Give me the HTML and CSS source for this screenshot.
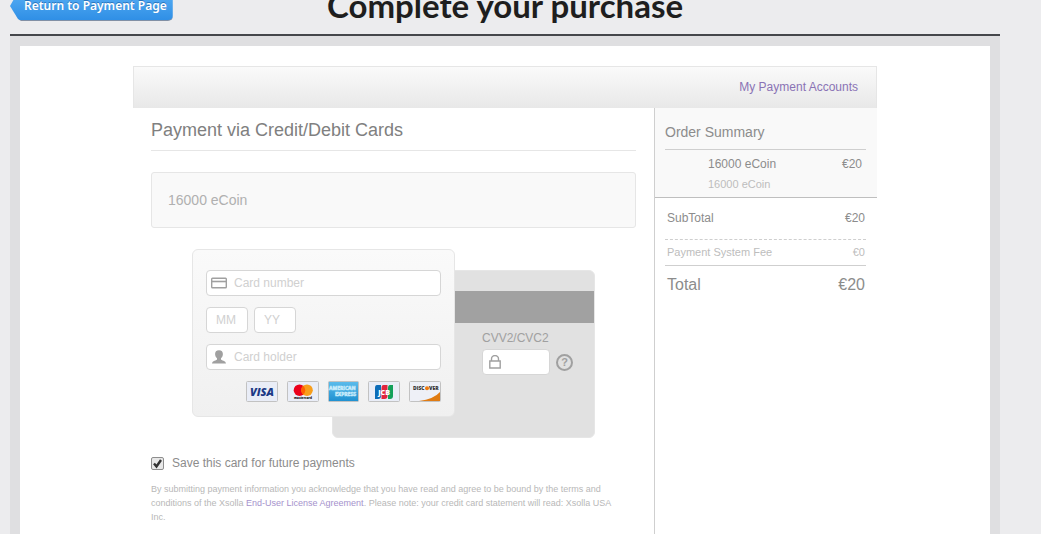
FILE: index.html
```html
<!DOCTYPE html>
<html lang="en">
<head>
	<meta charset="UTF-8">
	<title>Complete your purchase</title>
	<link rel="stylesheet" href="styles.css">
</head>
<body>

	<div class="page">
		<header class="header">
			<a class="back-btn" href="#">Return to Payment Page</a>
			<h1>Complete your purchase</h1>
		</header>

		<div class="frame">
			<div class="shop">
				<nav class="toolbar"><a href="#">My Payment Accounts</a></nav>

				<div class="columns">
					<form class="payment">
						<h2>Payment via Credit/Debit Cards</h2>
						<div class="product">16000 eCoin</div>

						<div class="cards">
							<!-- back side -->
							<div class="card card-back">
								<div class="stripe"></div>
								<div class="cvv">
									<label for="cvv">CVV2/CVC2</label>
									<div class="cvv-row">
										<div class="field">
											<svg width="12" height="14" viewBox="0 0 12 14"><path d="M2.5 6V4a3.5 3.500 0 0 1 7 0v2M.8 6h10.400v7H.8z" fill="none" stroke="#a0a0a0" stroke-width="1.400"/></svg>
											<input type="text" id="cvv">
										</div>
										<button type="button" class="help" aria-label="Help">?</button>
									</div>
								</div>
							</div>

							<!-- front side -->
							<div class="card card-front">
								<div class="field">
									<svg width="16" height="12" viewBox="0 0 16 12"><rect x=".7" y="1.200" width="14.600" height="9.600" rx=".8" fill="#fff" stroke="#a0a0a0" stroke-width="1.400"/><path d="M1 4.500h14" stroke="#a0a0a0" stroke-width="1.600"/></svg>
									<input type="text" placeholder="Card number" aria-label="Card number">
								</div>
								<div class="expiry">
									<div class="field"><input type="text" placeholder="MM" aria-label="Month"></div>
									<div class="field"><input type="text" placeholder="YY" aria-label="Year"></div>
								</div>
								<div class="field">
									<svg width="16" height="14" viewBox="0 0 16 14"><path d="M8 .2c2.600 0 4.100 1.600 3.900 4.100-.1 1.800-.9 3.200-1.900 4v1.200c0 .9 5 1.200 5 4.100H1c0-2.900 5-3.200 5-4.100V8.300c-1-.8-1.800-2.200-1.900-4C3.900 1.800 5.400.2 8 .2z" fill="#a0a0a0"/></svg>
									<input type="text" placeholder="Card holder" aria-label="Card holder">
								</div>
								<div class="brands">
									<svg width="32" height="21" viewBox="0 0 32 21"><rect x=".5" y=".5" width="31" height="20" rx="1" fill="#e9edf7" stroke="#c2c2c2"/><text x="16" y="15" text-anchor="middle" font-family="Open Sans, sans-serif" font-size="11" font-weight="800" font-style="italic" fill="#1c3a86">VISA</text></svg>
									<svg width="32" height="21" viewBox="0 0 32 21"><rect x=".5" y=".5" width="31" height="20" rx="1" fill="#e9edf7" stroke="#c2c2c2"/><circle cx="12.500" cy="9.200" r="5.800" fill="#eb001b"/><circle cx="20" cy="9.200" r="5.800" fill="#f79e1b"/><path d="M16.200 4.800a5.800 5.800 0 0 1 0 8.800 5.800 5.800 0 0 1 0-8.800z" fill="#ff5f00"/><text x="16" y="18" text-anchor="middle" font-family="Open Sans, sans-serif" font-size="3" font-weight="800" fill="#111">mastercard</text></svg>
									<svg width="31" height="21" viewBox="0 0 31 21"><defs><linearGradient id="amex" x2="0" y2="1"><stop stop-color="#5cbcec"/><stop offset="1" stop-color="#1f90d0"/></linearGradient></defs><rect x=".5" y=".5" width="30" height="20" rx="1" fill="url(#amex)" stroke="#c2c2c2"/><g font-family="Open Sans, sans-serif" font-size="5" font-weight="700" fill="#6cc2ea" stroke="#c8ebfb" stroke-width=".6"><text x="1" y="9">AMERICAN</text><text x="7" y="15">EXPRESS</text></g></svg>
									<svg width="32" height="21" viewBox="0 0 32 21"><rect x=".5" y=".5" width="31" height="20" rx="1" fill="#e9edf7" stroke="#c2c2c2"/><path d="M9 4h4v11q0 3-3 3H7V7q0-3 2-3z" fill="#0b6cb8"/><path d="M15.500 4h4v11q0 3-3 3h-3V7q0-3 2-3z" fill="#e0243d"/><path d="M22 4h3v11q0 3-3 3h-2V7q0-3 2-3z" fill="#12a05a"/><text x="16" y="13.500" text-anchor="middle" font-family="Open Sans, sans-serif" font-size="7" font-weight="800" fill="#fff">JCB</text></svg>
									<svg width="32" height="21" viewBox="0 0 32 21"><rect x=".5" y=".5" width="31" height="20" rx="1" fill="#eef0f7" stroke="#c2c2c2"/><path d="M10 20q15-2 21-9v9z" fill="#e07c14"/><g font-family="Open Sans, sans-serif" font-size="5" font-weight="800" fill="#333"><text x="4" y="9">DISC</text><text x="20" y="9">VER</text></g><circle cx="18" cy="7.200" r="2" fill="#f07a10"/></svg>
								</div>
							</div>
						</div>

						<label class="save"><input type="checkbox" checked><span>Save this card for future payments</span></label>
						<p class="legal">By submitting payment information you acknowledge that you have read and agree to be bound by the terms and conditions of the Xsolla <a href="#">End-User License Agreement</a>. Please note: your credit card statement will read: Xsolla USA Inc.</p>
					</form>

					<aside class="summary">
						<div class="order">
							<h3>Order Summary</h3>
							<div class="order-item">
								<div class="row"><span>16000 eCoin</span><span>€20</span></div>
								<div class="desc">16000 eCoin</div>
							</div>
						</div>
						<div class="totals">
							<div class="row subtotal"><span>SubTotal</span><span>€20</span></div>
							<div class="row fee"><span>Payment System Fee</span><span>€0</span></div>
							<div class="row total"><span>Total</span><span>€20</span></div>
						</div>
					</aside>
				</div>
			</div>
		</div>
	</div>

</body>
</html>
```

FILE: styles.css
```css
*{margin: 0;padding: 0;box-sizing: border-box;}
body{background: #ececee;font: 12px "Liberation Sans", Arial, sans-serif;color: #8c8c8c;}
a{color: #8a73b5;text-decoration: none;}

.page{display: flex;flex-direction: column;min-height: 100vh;padding: 0 41px 0 10px;}

/* header, its top part is scrolled out */
.header{display: grid;grid-template-columns: 1fr auto 1fr;align-items: start;height: 46px;margin-top: -10px;border-bottom: 2px solid #45474b;}
.header h1{font: 700 33px/30px Lato, sans-serif;color: #1e1e1e;}
.back-btn{justify-self: start;height: 31px;padding: 0 6px 0 14px;border-bottom: 1px solid #8290a5;border-radius: 0 5px 5px 0;background: linear-gradient(#5ab0f5, #2f8fe6);clip-path: polygon(0 16px, 9px 0, 100% 0, 100% 100%, 11px 100%, 8px 29px);font: 600 12px/32px "Noto Sans", sans-serif;color: #fff;text-shadow: 0 -1px 0 #2a75bd;}

.frame{flex: 1;display: flex;padding: 10px 10px 0;background: #dfdfe1;}
.shop{flex: 1;display: flex;flex-direction: column;align-items: center;padding-top: 20px;background: #fff;}
.toolbar,.columns{width: 100%;max-width: 744px;}
.toolbar{height: 42px;padding-right: 18px;border: 1px solid #e6e6e6;border-bottom: 0;background: linear-gradient(#fafafa, #e8e8e8);line-height: 41px;text-align: right;}
.columns{flex: 1;display: grid;grid-template-columns: 1fr 223px;}

/* left column */
.payment{padding: 0 18px;}
.payment h2{padding-top: 2px;border-bottom: 1px solid #e6e6e6;font-size: 18px;font-weight: normal;line-height: 40px;color: #808080;}
.product{margin-top: 21px;padding: 0 16px;border: 1px solid #e6e6e6;border-radius: 3px;background: #f9f9f9;font-size: 14px;line-height: 54px;color: #b0b0b0;}

/* the two sides of the card share the middle cell */
.cards{display: grid;grid-template-columns: 140px 123px 140px;grid-template-rows: 21px 147px 21px;justify-content: center;margin-top: 21px;}
.card{border: 1px solid #e6e6e6;border-radius: 6px;}
.card-front{grid-area: 1 / 1 / 3 / 3;z-index: 1;display: flex;flex-direction: column;gap: 11px;padding: 20px 13px 0;background: linear-gradient(#fafafa, #f0f0f0);}
.card-back{grid-area: 2 / 2 / 4 / 4;padding-top: 20px;background: #e1e1e1;}
.stripe{height: 32px;background: #a1a1a1;}
.cvv{padding: 6px 0 0 149px;}
.cvv label{display: block;line-height: 18px;padding-bottom: 2px;color: #a0a0a0;}
.cvv-row{display: flex;align-items: center;gap: 6px;}
.cvv .field{width: 68px;padding: 0 6px;}
.help{width: 17px;height: 17px;border: 2px solid #a0a0a0;border-radius: 50%;background: none;font: bold 11px/13px "Liberation Sans", Arial, sans-serif;color: #a0a0a0;}

.field{display: flex;align-items: center;gap: 7px;height: 26px;padding: 0 4px;border: 1px solid #d6d6d6;border-radius: 4px;background: #fff;}
.field svg{flex: none;}
.field input{flex: 1;min-width: 0;border: 0;outline: 0;background: none;font: inherit;color: #8c8c8c;}
.field input::placeholder{color: #d0d0d0;}
.expiry{display: flex;gap: 6px;}
.expiry .field{width: 42px;padding: 0 9px;}
.brands{display: flex;justify-content: flex-end;gap: 9px;}

.save{display: flex;align-items: center;gap: 8px;margin-top: 18px;line-height: 14px;}
.save input{appearance: none;width: 13px;height: 13px;border: 1px solid #8e8e8e;border-radius: 2px;background: #e8e8e8;}
.save input:checked{background: #e8e8e8 url("data:image/svg+xml,%3Csvg xmlns='http://www.w3.org/2000/svg' viewBox='0 0 11 11'%3E%3Cpath d='M2 5.500l2.500 3L9 2' fill='none' stroke='%23333' stroke-width='2.400'/%3E%3C/svg%3E") no-repeat center;}
.legal{margin-top: 12px;padding-right: 20px;font-size: 9px;line-height: 14px;color: #b8b8b8;}
.legal a{color: #a592cc;}

/* right column */
.summary{border-left: 1px solid #cfcfcf;}
.row{display: flex;justify-content: space-between;}
.order{padding: 8px 11px 3px 10px;border-bottom: 1px solid #bfbfbf;background: #f9f9f9;}
.order h3{border-bottom: 1px solid #cfcfcf;font-size: 14px;font-weight: normal;line-height: 33px;}
.order-item{padding: 4px 4px 0 43px;line-height: 20px;}
.desc,.fee{font-size: 11px;color: #bdbdbd;}
.totals{padding: 0 11px 0 10px;}
.totals .row{padding: 0 1px 0 2px;}
.subtotal{border-bottom: 1px dashed #cfcfcf;line-height: 41px;}
.fee{border-bottom: 1px solid #cfcfcf;line-height: 25px;}
.total{font-size: 16px;line-height: 38px;}
```
